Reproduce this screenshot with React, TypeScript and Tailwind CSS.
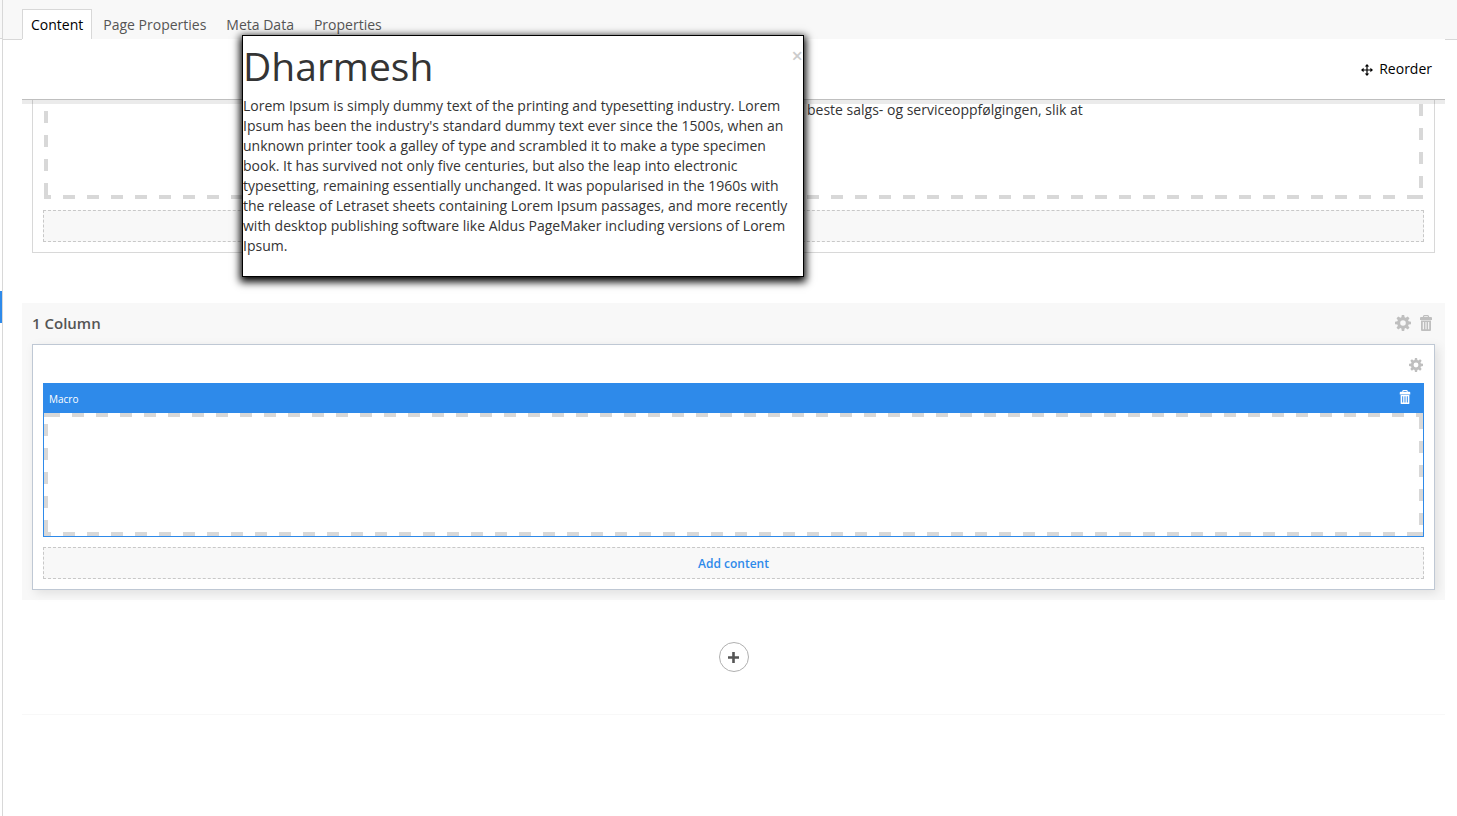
import React from "react";

const tabs = ["Content", "Page Properties", "Meta Data", "Properties"];

function GearIcon({ className }: { className: string }) {
  return (
    <svg viewBox="0 0 16 16" className={className} fill="currentColor" aria-hidden="true">
      <path
        fillRule="evenodd"
        d="M6.8 0h2.4l.4 2.3 1.1.5 2-1.4 1.8 1.8-1.4 2 .5 1.1 2.4.4v2.5l-2.4.4-.5 1.1 1.4 2-1.8 1.8-2-1.4-1.1.5-.4 2.4H6.8l-.4-2.4-1.1-.5-2 1.4-1.8-1.8 1.4-2-.5-1.1L0 9.2V6.7l2.4-.4.5-1.1-1.4-2 1.8-1.8 2 1.4 1.1-.5zM8 5.2a2.8 2.8 0 1 0 0 5.6 2.8 2.8 0 0 0 0-5.6z"
      />
    </svg>
  );
}

function TrashIcon({ className }: { className: string }) {
  return (
    <svg viewBox="0 0 12 16" className={className} aria-hidden="true">
      <path d="M3.5 2.5V1.5Q3.5.6 4.3.6h3.4q.8 0 .8.9v1" fill="none" stroke="currentColor" strokeWidth="1.2" />
      <path d="M1 2h10q1 0 1 1v2H0V3q0-1 1-1z" fill="currentColor" />
      <path
        fillRule="evenodd"
        fill="currentColor"
        d="M1 5.6h10V15q0 1-1 1H2q-1 0-1-1zM2.8 7v7.2h1.1V7zM5.45 7v7.2h1.1V7zM8.1 7v7.2h1.1V7z"
      />
    </svg>
  );
}

function MoveIcon({ className }: { className: string }) {
  return (
    <svg viewBox="0 0 12 12" className={className} fill="currentColor" aria-hidden="true">
      <path d="M6 0l2.2 2.6H6.6v2.8h2.8V3.8L12 6 9.4 8.2V6.6H6.6v2.8h1.6L6 12 3.8 9.4h1.6V6.6H2.6v1.6L0 6l2.6-2.2v1.6h2.8V2.6H3.8z" />
    </svg>
  );
}

function DashedFrame({ children }: { children?: React.ReactNode }) {
  return (
    <div className="h-[123px] p-1 [background-image:linear-gradient(#d8d8d8,#d8d8d8),linear-gradient(#d8d8d8,#d8d8d8),linear-gradient(90deg,#d8d8d8_12px,transparent_12px),linear-gradient(180deg,#d8d8d8_12px,transparent_12px),linear-gradient(270deg,#d8d8d8_12px,transparent_12px),linear-gradient(0deg,#d8d8d8_12px,transparent_12px)] [background-position:left_top,right_bottom,left_4px_top,right_top_4px,right_4px_bottom,left_bottom_4px] [background-repeat:no-repeat,no-repeat,repeat-x,repeat-y,repeat-x,repeat-y] [background-size:4px_4px,4px_4px,24px_4px,4px_24px,24px_4px,4px_24px]">
      {children}
    </div>
  );
}

function AddContent({ label }: { label: string }) {
  return (
    <button
      type="button"
      aria-label="Add content"
      className="mt-2.5 block h-8 w-full border border-dashed border-[#c8c8c8] bg-[#f8f8f8] pt-0.5 text-xs font-semibold text-[#2e8aea]"
    >
      {label}
    </button>
  );
}

export default function App() {
  return (
    <div className="relative flex min-h-screen bg-white font-['Open_Sans',sans-serif] text-sm leading-5 text-[#343434]">
      <aside className="flex w-[3px] shrink-0 flex-col border-r border-[#d8d8d8]">
        <div className="h-[39px] border-b border-[#d8d8d8] bg-[#f8f8f8]" />
        <div className="mt-[252px] h-8 bg-[#2e8aea]" />
      </aside>

      <main className="min-w-0 flex-1">
        <header className="h-10 border-b border-[#d8d8d8] bg-[#f8f8f8] pt-[9px] pl-[19px]">
          <nav className="flex gap-[3px]">
            {tabs.map((tab, i) => (
              <a
                key={tab}
                href="#"
                className={
                  i === 0
                    ? "h-[31px] border border-b-0 border-[#d8d8d8] bg-white px-2 pt-[5px] text-black"
                    : "h-[30px] pt-[6px] pr-[9px] pl-2 text-[#555555]"
                }
              >
                {tab}
              </a>
            ))}
          </nav>
        </header>

        <div className="pr-3 pl-[19px]">
          <div className="relative z-10 -mt-px flex h-[61px] items-center justify-end border-b border-[#bfbfbf] bg-white pr-[13px] shadow-[0_4px_0_rgba(0,0,0,0.08)]">
            <button type="button" className="flex items-center gap-1.5 text-black">
              <MoveIcon className="mt-px size-3" />
              Reorder
            </button>
          </div>

          <section className="-mt-[35px] px-2.5">
            <div className="border border-[#d8d8d8] p-2.5">
              <div className="px-px pb-px">
                <DashedFrame>
                  <p className="pt-5 pl-[759px] whitespace-nowrap">
                    beste salgs- og serviceoppfølgingen, slik at
                  </p>
                </DashedFrame>
              </div>
              <AddContent label="" />
            </div>
          </section>

          <section className="mt-[50px] bg-[#f8f8f8] p-2.5">
            <div className="flex h-[31px] items-start justify-between pr-[3px]">
              <h2 className="text-[15px] leading-5 font-semibold text-[#555555]">1 Column</h2>
              <div className="flex items-center gap-[9px] pt-[2px] text-[#bfbfbf]">
                <button type="button" aria-label="Row settings">
                  <GearIcon className="size-4" />
                </button>
                <button type="button" aria-label="Delete row">
                  <TrashIcon className="h-4 w-3" />
                </button>
              </div>
            </div>
            <div className="border border-[#bfc8d4] bg-white px-2.5 pb-2.5 shadow-[3px_3px_10px_rgba(0,0,0,0.1)]">
              <div className="flex h-[38px] items-center justify-end pt-0.5 pr-px text-[#bfbfbf]">
                <button type="button" aria-label="Cell settings">
                  <GearIcon className="size-3.5" />
                </button>
              </div>
              <div className="border border-[#2e8aea]">
                <div className="flex h-[29px] items-center justify-between bg-[#2e8aea] pr-3 pb-[3px] pl-[5px] text-white">
                  <span className="pt-1 text-[10px] leading-5">Macro</span>
                  <button type="button" aria-label="Delete macro">
                    <TrashIcon className="h-3.5 w-3" />
                  </button>
                </div>
                <DashedFrame />
              </div>
              <AddContent label="Add content" />
            </div>
          </section>

          <div className="mt-[42px] flex justify-center border-b border-[#f8f8f8] pb-[42px]">
            <button
              type="button"
              aria-label="Add row"
              className="flex size-[30px] items-center justify-center rounded-full border border-[#b0b0b0] pr-px text-[#555555]"
            >
              <svg viewBox="0 0 11 11" className="size-[11px]" fill="currentColor" aria-hidden="true">
                <path d="M4.2 0h2.6v4.2H11v2.6H6.8V11H4.2V6.8H0V4.2h4.2z" />
              </svg>
            </button>
          </div>
        </div>
      </main>

      <div
        role="dialog"
        aria-labelledby="dialog-title"
        className="absolute top-[35px] left-[242px] z-20 w-[562px] border border-black bg-white pt-2.5 pb-5 shadow-[0_3px_8px_2px_#000]"
      >
        <button
          type="button"
          aria-label="Close"
          className="absolute top-2.5 right-0 text-xl leading-5 font-semibold text-[#cccccc]"
        >
          ×
        </button>
        <h1 id="dialog-title" className="mb-2.5 text-[39px] leading-10">
          Dharmesh
        </h1>
        <p className="pr-3">
          Lorem Ipsum is simply dummy text of the printing and typesetting industry. Lorem Ipsum has been the
          industry's standard dummy text ever since the 1500s, when an unknown printer took a galley of type and
          scrambled it to make a type specimen book. It has survived not only five centuries, but also the leap into
          electronic typesetting, remaining essentially unchanged. It was popularised in the 1960s with the release
          of Letraset sheets containing Lorem Ipsum passages, and more recently with desktop publishing software like
          Aldus PageMaker including versions of Lorem Ipsum.
        </p>
      </div>
    </div>
  );
}
